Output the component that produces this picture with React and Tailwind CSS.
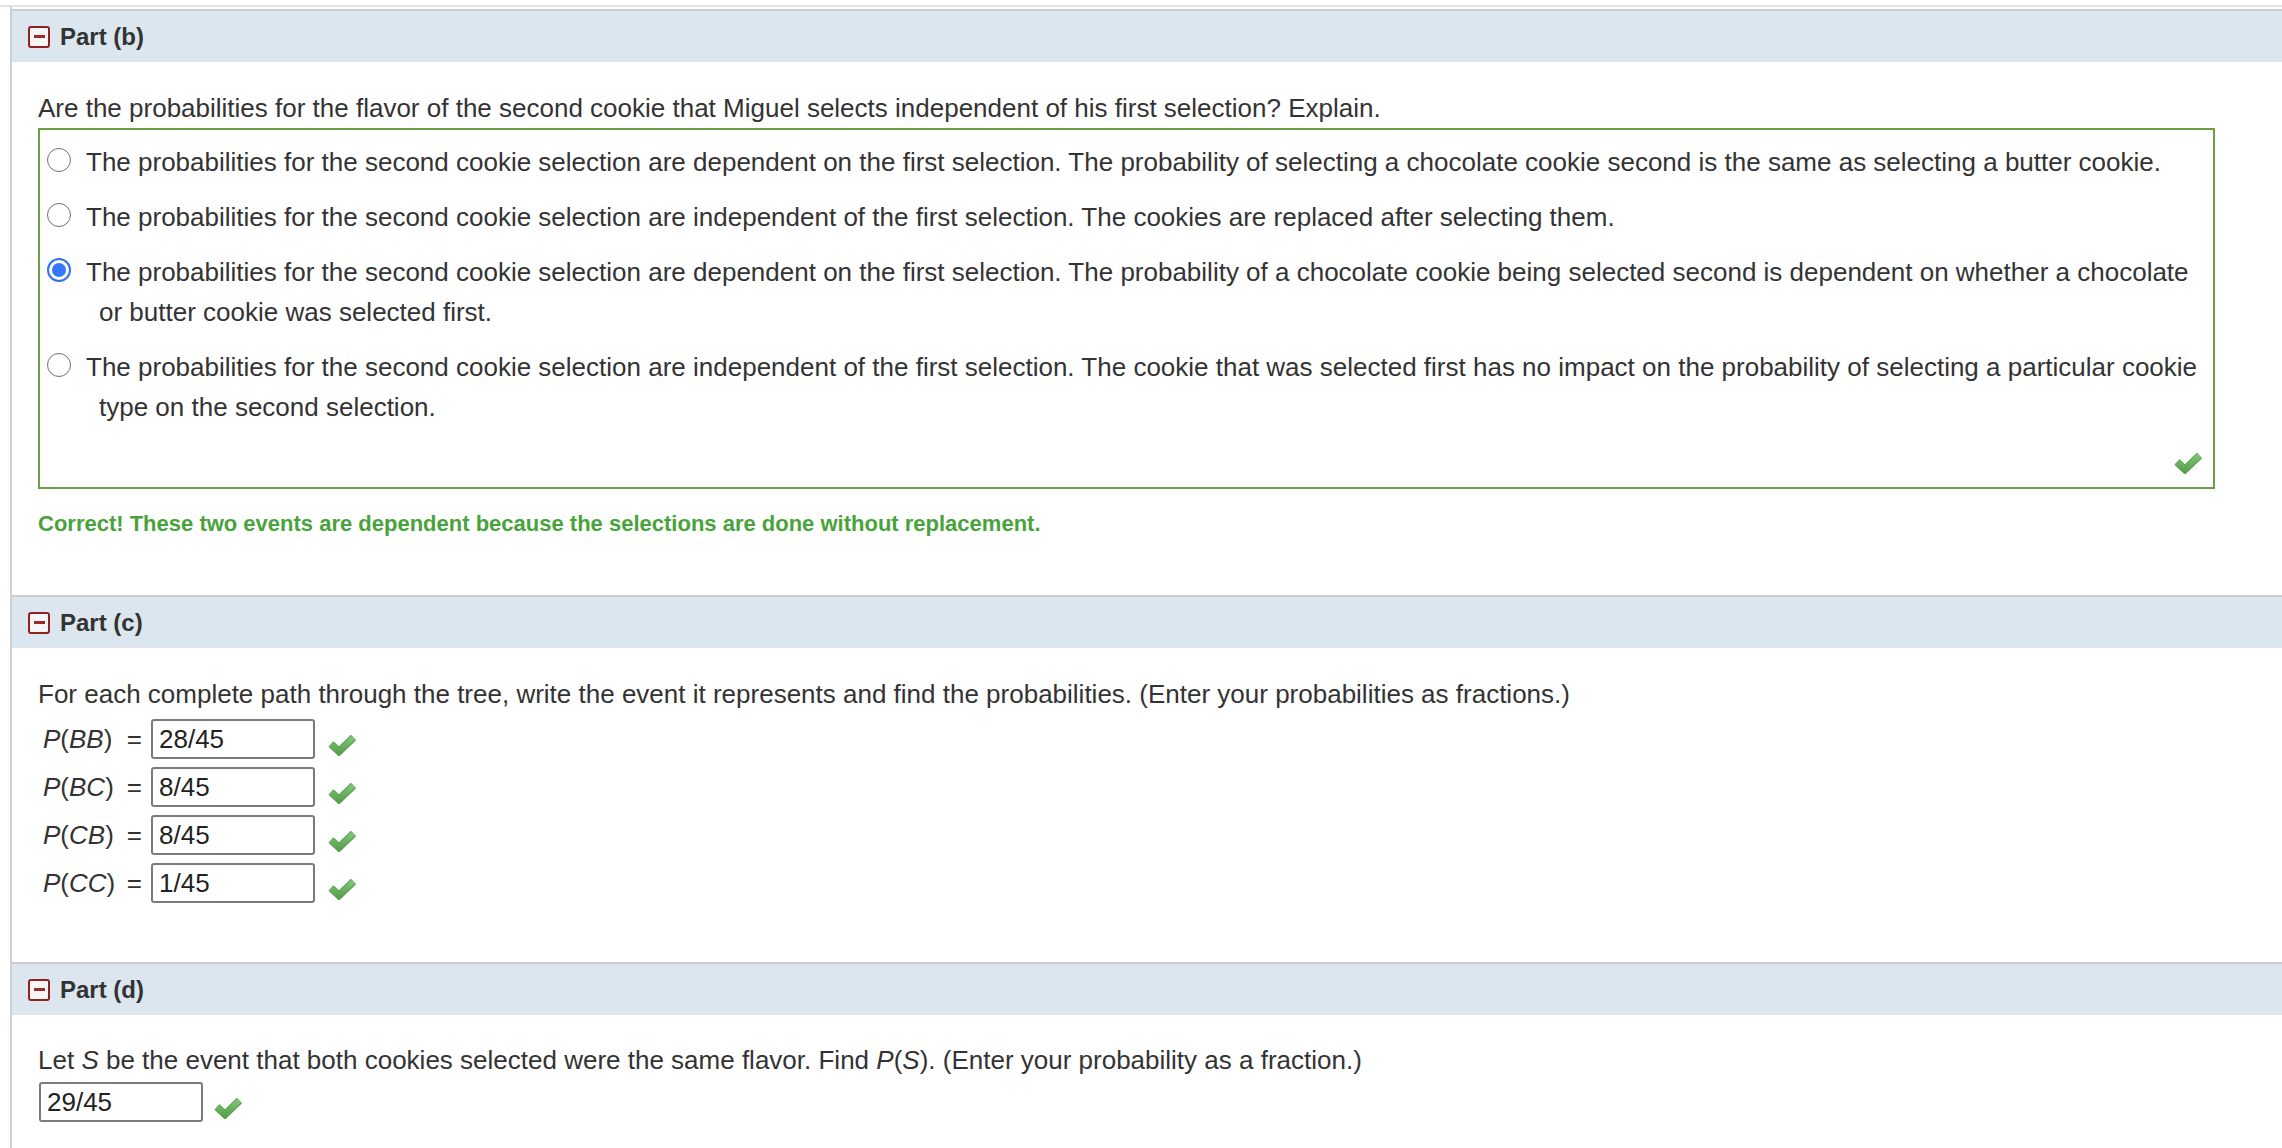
import React from 'react';

const options = [
  {
    text: 'The probabilities for the second cookie selection are dependent on the first selection. The probability of selecting a chocolate cookie second is the same as selecting a butter cookie.',
    checked: false,
  },
  {
    text: 'The probabilities for the second cookie selection are independent of the first selection. The cookies are replaced after selecting them.',
    checked: false,
  },
  {
    text: 'The probabilities for the second cookie selection are dependent on the first selection. The probability of a chocolate cookie being selected second is dependent on whether a chocolate or butter cookie was selected first.',
    checked: true,
  },
  {
    text: 'The probabilities for the second cookie selection are independent of the first selection. The cookie that was selected first has no impact on the probability of selecting a particular cookie type on the second selection.',
    checked: false,
  },
];

const paths = [
  { a: 'B', b: 'B', value: '28/45' },
  { a: 'B', b: 'C', value: '8/45' },
  { a: 'C', b: 'B', value: '8/45' },
  { a: 'C', b: 'C', value: '1/45' },
];

const Check = () => (
  <svg width="30" height="24" viewBox="0 0 30 24" className="shrink-0">
    <defs>
      <linearGradient id="chk" x1="0" y1="0" x2="0" y2="24" gradientUnits="userSpaceOnUse">
        <stop offset="0" stopColor="#8ccf82" />
        <stop offset="1" stopColor="#4f9c46" />
      </linearGradient>
    </defs>
    <path d="M4 12 L12 19.5 L26.5 5.5" fill="none" stroke="#5a9e50" strokeWidth="7.5" strokeLinejoin="miter" />
    <path d="M4 12 L12 19.5 L26.5 5.5" fill="none" stroke="url(#chk)" strokeWidth="5.5" strokeLinejoin="miter" />
  </svg>
);

const Collapse = () => (
  <span className="w-[22px] h-[22px] border-2 border-[#8f2121] rounded-[3px] bg-[#f6f6f6] flex items-center justify-center shrink-0">
    <span className="w-[11px] h-[3px] bg-[#9b2b2b]" />
  </span>
);

const Header = ({ title }) => (
  <div className="h-[53px] border-t-2 border-[#cccccc] bg-[#dce6ef] flex items-center pl-[16px] gap-[10px]">
    <Collapse />
    <span className="text-[24px] font-bold text-[#333333]">{title}</span>
  </div>
);

const Radio = ({ checked }) =>
  checked ? (
    <span className="inline-block indent-0 w-[24px] h-[24px] rounded-full border-2 border-[#2f71ee] bg-white mr-[15px] align-[-1px] relative">
      <span className="absolute inset-[3px] rounded-full bg-[#3478f6]" />
    </span>
  ) : (
    <span className="inline-block indent-0 w-[24px] h-[24px] rounded-full border-[1.5px] border-[#707070] bg-white mr-[15px] align-[-1px]" />
  );

const Box = ({ value, className = '' }) => (
  <div className={`w-[164px] h-[40px] border-2 border-[#7b7b7b] rounded-[3px] pl-[6px] flex items-center text-[26px] text-[#222222] ${className}`}>
    {value}
  </div>
);

export default function App() {
  return (
    <div className="min-h-screen bg-white pt-[5px] font-['Liberation_Sans',Arial,sans-serif] text-[#333333]">
      <div className="border-t-2 border-[#e2e2e2] pl-[10px]">
        <div className="border-l-2 border-[#d0d0d0] pt-[2px]">
          {/* Part (b) */}
          <Header title="Part (b)" />
          <div className="pl-[26px] pr-[67px] pt-[30px] pb-[57px]">
            <p className="text-[26px] leading-[32px]">
              Are the probabilities for the flavor of the second cookie that Miguel selects independent of his first selection? Explain.
            </p>
            <div className="mt-[4px] border-2 border-[#6a9f45] pt-[12px]">
              <div className="flex flex-col gap-[15px]">
                {options.map((o, i) => (
                  <p key={i} className="pl-[59px] indent-[-52px] text-[26px] leading-[40px]">
                    <Radio checked={o.checked} />
                    {o.text}
                  </p>
                ))}
              </div>
              <div className="flex justify-end pr-[10px] mt-[23px] pb-[13px]">
                <Check />
              </div>
            </div>
            <p className="mt-[21px] text-[22px] leading-[28px] font-bold text-[#48a33a]">
              Correct! These two events are dependent because the selections are done without replacement.
            </p>
          </div>

          {/* Part (c) */}
          <Header title="Part (c)" />
          <div className="pl-[26px] pt-[30px] pb-[59px]">
            <p className="text-[26px] leading-[32px]">
              For each complete path through the tree, write the event it represents and find the probabilities. (Enter your probabilities as fractions.)
            </p>
            <div className="mt-[9px] flex flex-col gap-[8px]">
              {paths.map((p, i) => (
                <div key={i} className="flex items-center h-[40px]">
                  <div className="w-[113px] pl-[5px] pr-[9px] flex items-center text-[26px] text-[#333333]">
                    <span>
                      <i>P</i>(<i>{p.a}</i><i>{p.b}</i>)
                    </span>
                    <span className="ml-auto">=</span>
                  </div>
                  <Box value={p.value} />
                  <span className="ml-[12px] mt-[10px]">
                    <Check />
                  </span>
                </div>
              ))}
            </div>
          </div>

          {/* Part (d) */}
          <Header title="Part (d)" />
          <div className="pl-[26px] pt-[29px] pb-[40px]">
            <p className="text-[26px] leading-[32px]">
              Let <i>S</i> be the event that both cookies selected were the same flavor. Find <i>P</i>(<i>S</i>). (Enter your probability as a fraction.)
            </p>
            <div className="mt-[6px] flex items-center">
              <Box value="29/45" className="ml-[1px]" />
              <span className="ml-[10px] mt-[10px]">
                <Check />
              </span>
            </div>
          </div>
        </div>
      </div>
    </div>
  );
}
